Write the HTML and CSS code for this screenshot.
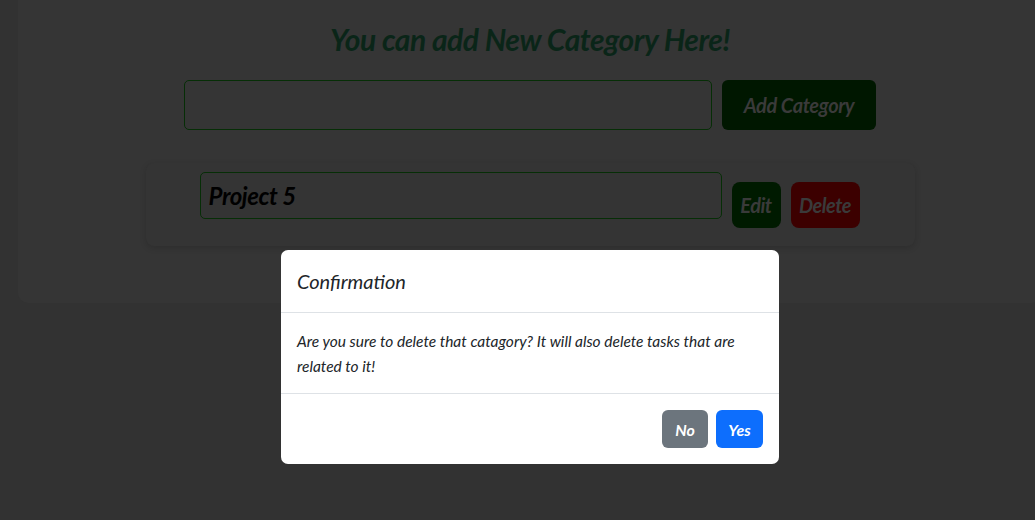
FILE: index.html
```html
<!DOCTYPE html>
<html lang="en">
<head>
<meta charset="utf-8">
<title>Categories</title>
<link rel="stylesheet" href="styles.css">
</head>
<body>
<main class="page">
  <section class="panel">
    <h2 class="title">You can add New Category Here!</h2>
    <form class="add-row">
      <input class="add-input" type="text">
      <button type="button" class="btn-add">Add Category</button>
    </form>
    <div class="cat-card">
      <input class="cat-input" type="text" value="Project 5">
      <button type="button" class="btn-edit">Edit</button>
      <button type="button" class="btn-delete">Delete</button>
    </div>
  </section>
</main>
<div class="modal">
  <div class="modal-header">Confirmation</div>
  <div class="modal-body">Are you sure to delete that catagory? It will also delete tasks that are related to it!</div>
  <div class="modal-footer">
    <button type="button" class="btn-no">No</button>
    <button type="button" class="btn-yes">Yes</button>
  </div>
</div>
</body>
</html>
```
FILE: styles.css
```css
* { box-sizing: border-box; }
html, body { margin: 0; height: 100%; }
body {
  background: #323232;
  font-family: Lato, "Open Sans", sans-serif;
  font-style: italic;
  overflow: hidden;
  width: 1035px;
  height: 520px;
  position: relative;
}
.page { padding-left: 18px; }
.panel {
  width: 1024px;
  height: 303px;
  background: #353535;
  border-radius: 0 0 10px 10px;
  display: flex;
  flex-direction: column;
  align-items: center;
  padding-top: 20px;
}
.title {
  margin: 0;
  font-size: 30px;
  line-height: 38px;
  font-weight: 700;
  color: #0a2518;
  letter-spacing: -0.45px;
}
.add-row {
  margin-top: 22px;
  display: flex;
  gap: 10px;
}
.add-input {
  width: 528px;
  height: 50px;
  background: transparent;
  border: 1px solid #062e06;
  border-radius: 5px;
}
.btn-add {
  width: 154px;
  height: 50px;
  border: 0;
  border-radius: 6px;
  background: #001700;
  color: #3a3a3a;
  font: italic 700 20px Lato, sans-serif;
  letter-spacing: -0.4px;
  padding: 0;
}
.cat-card {
  margin-top: 33px;
  width: 769px;
  height: 83px;
  background: #343434;
  border-radius: 8px;
  box-shadow: 0 2px 6px rgba(0,0,0,0.15);
  display: flex;
  align-items: flex-start;
  padding: 9px 0 0 54px;
  gap: 10px;
}
.cat-input {
  width: 522px;
  height: 47px;
  background: transparent;
  border: 1px solid #062e06;
  border-radius: 5px;
  padding: 0 8px;
  font: italic 700 24px Lato, sans-serif;
  color: #000;
  letter-spacing: -0.4px;
}
.btn-edit, .btn-delete {
  margin-top: 10px;
  height: 46px;
  border: 0;
  border-radius: 8px;
  color: #3a3a3a;
  font: italic 700 20px Lato, sans-serif;
  letter-spacing: -0.5px;
  padding: 0;
}
.btn-edit { width: 49px; background: #001a00; }
.btn-delete { width: 69px; background: #3c0000; }
.modal {
  position: absolute;
  left: 281px;
  top: 250px;
  width: 498px;
  background: #fff;
  border-radius: 7px;
  color: #212529;
}
.modal-header {
  padding: 16px;
  font-size: 20px;
  line-height: 30px;
  border-bottom: 1px solid #dee2e6;
}
.modal-body {
  padding: 16px;
  font-size: 15.5px;
  line-height: 25px;
  border-bottom: 1px solid #dee2e6;
  height: 81px;
}
.modal-footer {
  display: flex;
  justify-content: flex-end;
  gap: 8px;
  padding: 16px;
}
.btn-no, .btn-yes {
  height: 38px;
  border: 0;
  border-radius: 6px;
  color: #fff;
  font: italic 700 16px Lato, sans-serif;
  padding: 0 12px;
}
.btn-no { background: #6c757d; width: 46px; }
.btn-yes { background: #0d6efd; width: 47px; }
```
